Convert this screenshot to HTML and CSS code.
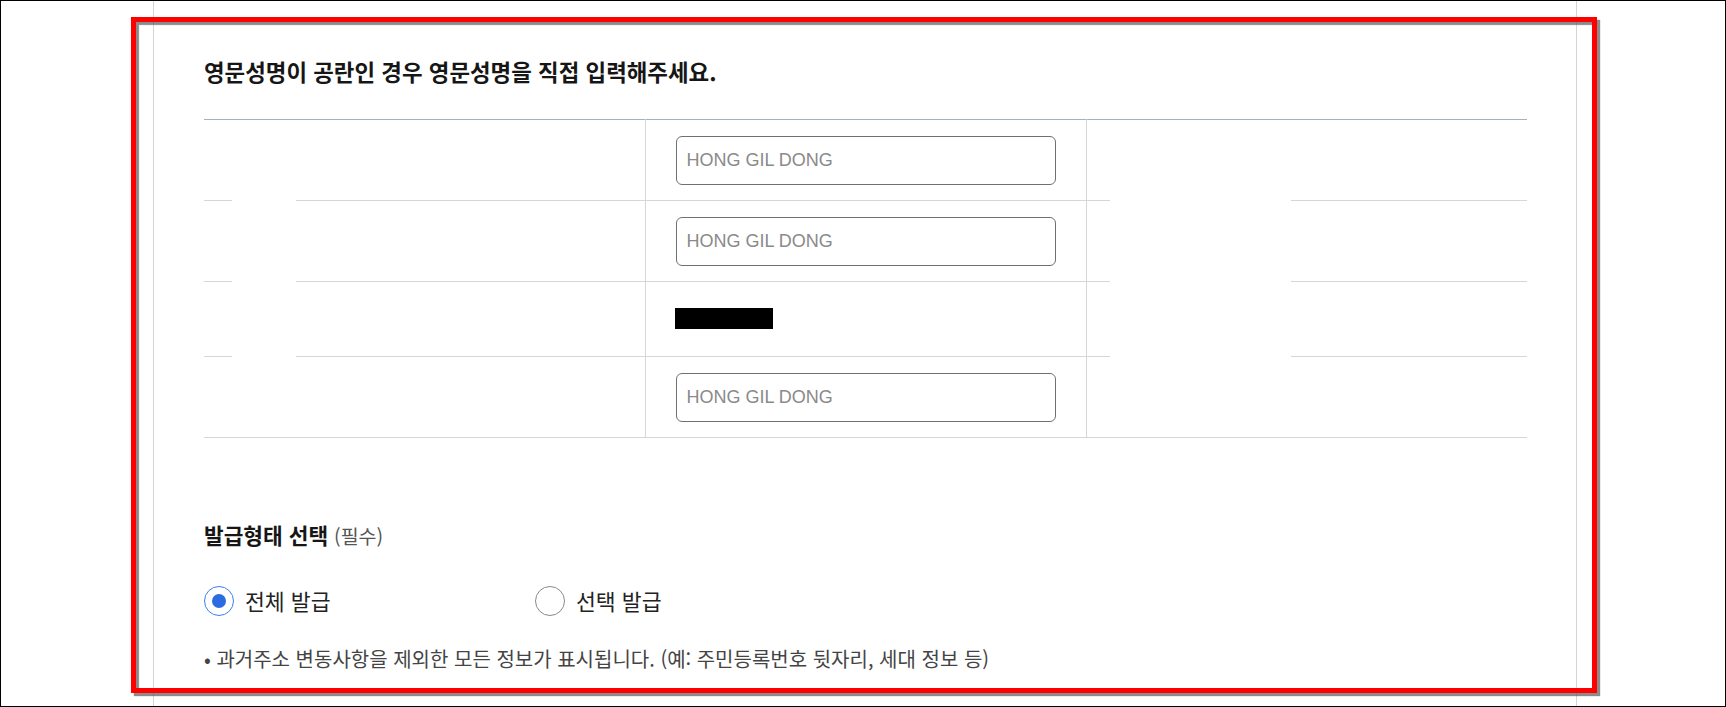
FILE: index.html
```html
<!DOCTYPE html>
<html lang="ko">
<head>
<meta charset="utf-8">
<title>발급형태 선택</title>
<link rel="stylesheet" href="styles.css">
</head>
<body>
<div class="frame">
  <div class="page">
    <h2 class="notice">영문성명이 공란인 경우 영문성명을 직접 입력해주세요.</h2>

    <div class="table-wrap">
      <table class="name-table">
        <tbody>
          <tr>
            <th></th>
            <td><input class="field" type="text" placeholder="HONG GIL DONG"></td>
            <td class="last"></td>
          </tr>
          <tr>
            <th></th>
            <td><input class="field" type="text" placeholder="HONG GIL DONG"></td>
            <td class="last"></td>
          </tr>
          <tr class="row-text">
            <th></th>
            <td><span class="redact"></span></td>
            <td class="last"></td>
          </tr>
          <tr>
            <th></th>
            <td><input class="field" type="text" placeholder="HONG GIL DONG"></td>
            <td class="last"></td>
          </tr>
        </tbody>
      </table>
      <div class="mask mask-a"></div>
      <div class="mask mask-b"></div>
    </div>

    <h3 class="section-title">발급형태 선택 <span class="req">(필수)</span></h3>

    <div class="radio-group">
      <label class="radio">
        <span class="radio-mark checked"></span>
        <span class="radio-text">전체 발급</span>
      </label>
      <label class="radio">
        <span class="radio-mark"></span>
        <span class="radio-text">선택 발급</span>
      </label>
    </div>

    <p class="note">• 과거주소 변동사항을 제외한 모든 정보가 표시됩니다. (예: 주민등록번호 뒷자리, 세대 정보 등)</p>
  </div>
  <div class="highlight"></div>
</div>
</body>
</html>
```
FILE: styles.css
```css
* { box-sizing: border-box; }

html, body {
  margin: 0;
  padding: 0;
  background: #fff;
}

body {
  font-family: "Noto Sans CJK KR", "Noto Sans", sans-serif;
  color: #222;
}

.frame {
  position: relative;
  width: 1726px;
  height: 707px;
  border: 1px solid #000;
  overflow: hidden;
  background: #fff;
}

.page {
  margin-left: 152px;
  width: 1424px;
  height: 100%;
  border-left: 1px solid #d4d4d4;
  border-right: 1px solid #d4d4d4;
  padding: 55px 49px 0 50px;
}

.notice {
  margin: 0;
  font-size: 22.4px;
  line-height: 30px;
  font-weight: 700;
  color: #161616;
  letter-spacing: 0;
}

.table-wrap {
  position: relative;
  margin-top: 33px;
}

.name-table {
  width: 100%;
  border-collapse: collapse;
  table-layout: fixed;
  border-top: 1px solid #a2b2c4;
}

.name-table th,
.name-table td {
  padding: 16px 30px 15px;
  border-bottom: 1px solid #d6d6d6;
  border-right: 1px solid #d6d6d6;
  vertical-align: middle;
  text-align: left;
}

.name-table .last { border-right: none; }

.name-table .row-text td,
.name-table .row-text th {
  padding-top: 26px;
  padding-bottom: 27px;
  height: 75px;
}

.field {
  display: block;
  width: 100%;
  height: 49px;
  margin: 0;
  padding: 0 10px;
  border: 1px solid #707070;
  border-radius: 6px;
  font-family: "Liberation Sans", Arial, sans-serif;
  font-size: 18px;
  color: #222;
  background: #fff;
  outline: none;
}

.field::placeholder { color: #8a8a8a; }

.redact {
  display: block;
  width: 98px;
  height: 21px;
  margin-left: -1px;
  background: #000;
}

.mask {
  position: absolute;
  top: 71px;
  height: 180px;
  background: #fff;
}

.mask-a { left: 28px; width: 64px; }
.mask-b { left: 906px; width: 181px; }

.section-title {
  margin: 82px 0 0;
  font-size: 21.4px;
  line-height: 30px;
  font-weight: 700;
  color: #161616;
}

.section-title .req {
  font-size: 19.5px;
  font-weight: 400;
  color: #555;
}

.radio-group {
  display: grid;
  grid-template-columns: 331px auto;
  margin-top: 35px;
}

.radio {
  display: flex;
  align-items: center;
  gap: 11px;
  height: 30px;
}

.radio-mark {
  width: 30px;
  height: 30px;
  border-radius: 50%;
  border: 1px solid #8a8a8a;
  display: flex;
  align-items: center;
  justify-content: center;
  flex: none;
}

.radio-mark.checked {
  border: 1.5px solid #3a80ee;
}

.radio-mark.checked::after {
  content: "";
  width: 14px;
  height: 14px;
  border-radius: 50%;
  background: #2b6de0;
}

.radio-text {
  font-size: 21.6px;
  line-height: 30px;
  color: #222;
}

.note {
  margin: 29px 0 0;
  font-size: 20px;
  line-height: 28px;
  color: #444;
}

.highlight {
  position: absolute;
  left: 130px;
  top: 16px;
  width: 1466px;
  height: 676px;
  border: 5px solid #ff0000;
  box-shadow: 3px 3px 1px rgba(90, 90, 90, 0.7), inset 3px 3px 1px rgba(90, 90, 90, 0.7);
  pointer-events: none;
}
```
